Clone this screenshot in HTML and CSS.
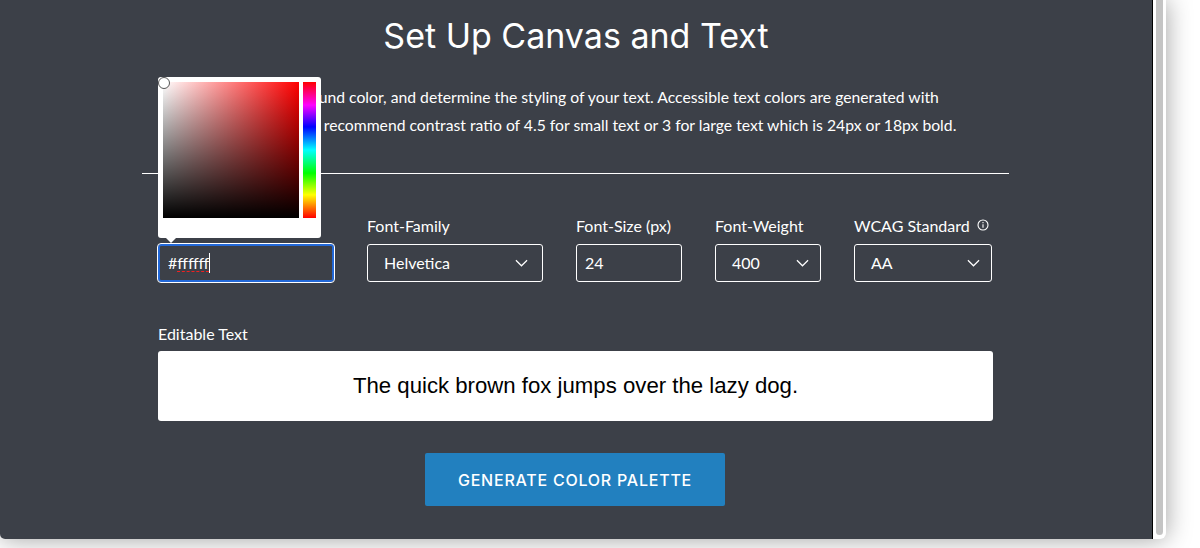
FILE: index.html
```html
<!DOCTYPE html>
<html lang="en">
<head>
<meta charset="utf-8">
<title>Set Up Canvas and Text</title>
<link rel="stylesheet" href="styles.css">
</head>
<body>
<div class="window">
  <main class="panel">
    <h1 class="title">Set Up Canvas and Text</h1>
    <div class="content">
      <p class="intro">Configure your background color, and determine the styling of your text. Accessible text colors are generated with<br>using WCAG guidelines recommend contrast ratio of 4.5 for small text or 3 for large text which is 24px or 18px bold.</p>
      <hr class="divider">
      <div class="fields">
        <div class="field field-color">
          <span class="label">Background</span>
          <div class="box box-focus"><span class="hash">#</span><span class="misspelled">ffffff</span><span class="caret"></span></div>
          <div class="picker">
            <div class="sat"><span class="thumb"></span></div>
            <div class="hue"></div>
          </div>
        </div>
        <div class="field field-family">
          <span class="label">Font-Family</span>
          <div class="box box-select">Helvetica
            <svg class="chev" viewBox="0 0 14 8"><path d="M1 1l6 6 6-6"/></svg>
          </div>
        </div>
        <div class="field field-size">
          <span class="label">Font-Size (px)</span>
          <div class="box box-input">24</div>
        </div>
        <div class="field field-weight">
          <span class="label">Font-Weight</span>
          <div class="box box-select">400
            <svg class="chev" viewBox="0 0 14 8"><path d="M1 1l6 6 6-6"/></svg>
          </div>
        </div>
        <div class="field field-wcag">
          <span class="label">WCAG Standard<svg class="info" viewBox="0 0 12 12"><circle cx="6" cy="6" r="5"/><path d="M6 5.2v3.6M6 3v1.2"/></svg></span>
          <div class="box box-select">AA
            <svg class="chev" viewBox="0 0 14 8"><path d="M1 1l6 6 6-6"/></svg>
          </div>
        </div>
      </div>
      <div class="editable">
        <span class="label">Editable Text</span>
        <div class="sample">The quick brown fox jumps over the lazy dog.</div>
      </div>
      <div class="actions">
        <button class="generate" type="button">GENERATE COLOR PALETTE</button>
      </div>
    </div>
  </main>
  <div class="scrollbar"><div class="scroll-thumb"></div></div>
</div>
</body>
</html>
```

FILE: styles.css
```css
* { box-sizing: border-box; }
html, body { margin: 0; height: 548px; overflow: hidden; background: #fff; }
body { font-family: "Lato", "Liberation Sans", sans-serif; color: #fff; }

.window {
  display: flex;
  width: 1166px;
  height: 539px;
  background: #fff;
  border-radius: 0 0 6px 6px;
  box-shadow: 0 0 26px rgba(0, 0, 0, .38);
}
.panel {
  width: 1153px;
  height: 539px;
  background: #3c4048;
  border-right: 1px solid #000;
  border-radius: 0 0 0 5px;
  overflow: hidden;
}
.scrollbar { flex: 1; padding: 0 3px 4px; }
.scroll-thumb { height: 100%; background: #c4c4c4; border-radius: 0 0 4px 4px; }

.title {
  margin: 0;
  padding-top: 15px;
  height: 61px;
  text-align: center;
  font: 400 34px/42px "Inter", "Liberation Sans", sans-serif;
}
.content { width: 867px; margin-left: 142px; }
.intro {
  margin: 0;
  padding: 22px 0 0 16px;
  height: 112px;
  font-size: 15.72px;
  line-height: 28px;
  white-space: nowrap;
}
.divider { margin: 0; border: 0; border-top: 1px solid #fff; }

.fields { display: flex; padding: 42px 0 0 16px; gap: 33px; }
.field { position: relative; display: flex; flex-direction: column; }
.field-color { width: 176px; }
.field-family { width: 176px; }
.field-size, .field-weight { width: 106px; }
.field-wcag { width: 138px; }
.label { display: block; height: 28px; font-size: 16px; line-height: 20px; white-space: nowrap; }

.box {
  display: flex;
  align-items: center;
  height: 38px;
  padding-bottom: 1px;
  border: 1px solid #fff;
  border-radius: 3px;
  font-size: 16px;
}
.box-select { position: relative; padding-left: 16px; }
.box-input { padding-left: 8px; }
.box-focus {
  padding-left: 8px;
  border: 2px solid #2268d8;
  outline: 1px solid #fff;
  outline-offset: 0;
}
.misspelled { border-bottom: 1px dashed #f02020; line-height: 17px; }
.hash { line-height: 17px; }
.caret { width: 1px; height: 20px; background: #fff; }

.chev {
  position: absolute;
  right: 11px;
  top: 14px;
  width: 13px;
  height: 8px;
  fill: none;
  stroke: #fff;
  stroke-width: 1.3;
}
.field-family .chev { right: 14px; }
.info {
  width: 12px;
  height: 12px;
  margin-left: 7px;
  vertical-align: 1px;
  fill: none;
  stroke: #fff;
  stroke-width: 1.1;
}

.picker {
  position: absolute;
  left: 0;
  bottom: 44px;
  display: flex;
  gap: 4px;
  width: 163px;
  height: 161px;
  padding: 5px 5px 20px;
  background: #fff;
  border-radius: 3px;
}
.picker::after {
  content: "";
  position: absolute;
  left: 7px;
  bottom: -5px;
  border: 6px solid transparent;
  border-top-color: #fff;
  border-bottom: 0;
}
.sat {
  position: relative;
  width: 136px;
  height: 136px;
  background: linear-gradient(to top, #000, transparent), linear-gradient(to right, #fff, #f00);
}
.thumb {
  position: absolute;
  left: -5px;
  top: -5px;
  width: 12px;
  height: 12px;
  border-radius: 50%;
  background: #fff;
  border: 1px solid #555;
}
.hue {
  width: 13px;
  height: 136px;
  background: linear-gradient(to bottom, #f00, #f0f 17%, #00f 33%, #0ff 50%, #0f0 67%, #ff0 83%, #f00);
}

.editable { padding: 42px 0 0 16px; }
.sample {
  display: flex;
  align-items: center;
  justify-content: center;
  width: 835px;
  height: 70px;
  margin-top: -1px;
  background: #fff;
  border-radius: 3px;
  color: #000;
  font: 400 22.2px "Liberation Sans", sans-serif;
}
.actions { display: flex; padding: 32px 0 0 283px; }
.generate {
  width: 300px;
  height: 53px;
  border: 0;
  border-radius: 2px;
  background: #2280bf;
  color: #fff;
  font: 500 16px "Inter", "Liberation Sans", sans-serif;
  letter-spacing: .77px;
}
```
